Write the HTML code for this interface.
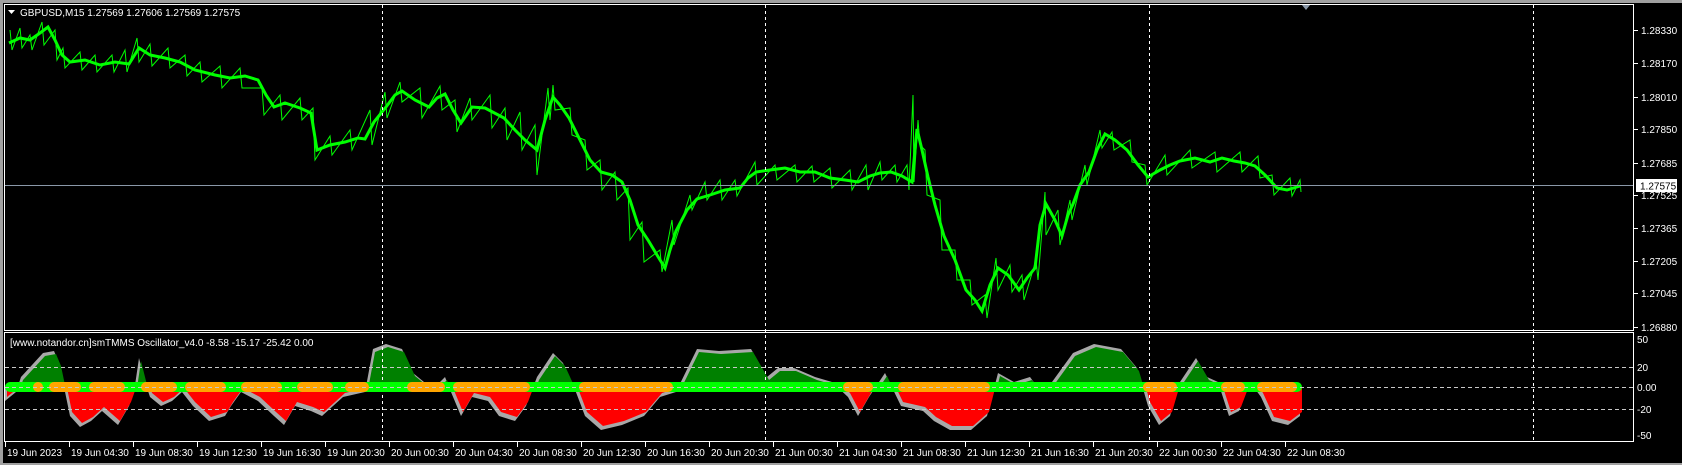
<!DOCTYPE html>
<html><head><meta charset="utf-8">
<style>
html,body{margin:0;padding:0;background:#000;overflow:hidden}
body{width:1682px;height:465px;position:relative}
svg{position:absolute;left:0;top:0}
text{font-family:"Liberation Sans",sans-serif;font-size:10px;fill:#fff}
</style></head><body>
<svg width="1682" height="465" viewBox="0 0 1682 465" xmlns="http://www.w3.org/2000/svg">
<defs>
<clipPath id="up"><rect x="5" y="333" width="1628" height="54"/></clipPath>
<clipPath id="dn"><rect x="5" y="387" width="1628" height="54"/></clipPath>
</defs>
<rect x="0" y="0" width="1682" height="465" fill="#000"/>
<!-- oscillator histogram -->
<g id="oscg">
<polygon id="op" points="5,387 5,401 16,392 21,377 43,353 54,351 59,363 64,387 70,416 80,427 91,421 102,411 118,425 129,406 134,392 139,358 145,382 150,397 161,406 172,401 182,392 193,406 209,421 225,416 231,406 241,392 258,401 274,416 284,425 295,406 311,411 322,416 333,406 343,397 365,392 373,349 386,344 402,349 413,373 424,382 435,387 445,377 451,392 461,416 472,397 488,401 499,416 515,421 526,406 537,377 553,353 563,363 574,387 585,416 601,430 622,425 644,416 660,397 676,392 697,349 719,351 751,349 767,377 778,368 794,368 815,377 832,382 848,397 858,416 869,397 885,373 901,406 923,411 934,421 950,430 971,430 987,416 998,373 1014,382 1030,377 1041,392 1052,382 1073,353 1094,344 1121,349 1137,368 1148,406 1159,425 1170,416 1180,382 1196,358 1207,377 1218,382 1229,416 1239,411 1250,382 1261,397 1272,421 1288,425 1300,416 1300,387" fill="#a8a8a8"/>
<g clip-path="url(#up)"><polygon points="5,387 5,401 16,392 21,377 43,353 54,351 59,363 64,387 70,416 80,427 91,421 102,411 118,425 129,406 134,392 139,358 145,382 150,397 161,406 172,401 182,392 193,406 209,421 225,416 231,406 241,392 258,401 274,416 284,425 295,406 311,411 322,416 333,406 343,397 365,392 373,349 386,344 402,349 413,373 424,382 435,387 445,377 451,392 461,416 472,397 488,401 499,416 515,421 526,406 537,377 553,353 563,363 574,387 585,416 601,430 622,425 644,416 660,397 676,392 697,349 719,351 751,349 767,377 778,368 794,368 815,377 832,382 848,397 858,416 869,397 885,373 901,406 923,411 934,421 950,430 971,430 987,416 998,373 1014,382 1030,377 1041,392 1052,382 1073,353 1094,344 1121,349 1137,368 1148,406 1159,425 1170,416 1180,382 1196,358 1207,377 1218,382 1229,416 1239,411 1250,382 1261,397 1272,421 1288,425 1300,416 1300,387" fill="#008000" transform="translate(2,3)"/></g>
<g clip-path="url(#dn)"><polygon points="5,387 5,401 16,392 21,377 43,353 54,351 59,363 64,387 70,416 80,427 91,421 102,411 118,425 129,406 134,392 139,358 145,382 150,397 161,406 172,401 182,392 193,406 209,421 225,416 231,406 241,392 258,401 274,416 284,425 295,406 311,411 322,416 333,406 343,397 365,392 373,349 386,344 402,349 413,373 424,382 435,387 445,377 451,392 461,416 472,397 488,401 499,416 515,421 526,406 537,377 553,353 563,363 574,387 585,416 601,430 622,425 644,416 660,397 676,392 697,349 719,351 751,349 767,377 778,368 794,368 815,377 832,382 848,397 858,416 869,397 885,373 901,406 923,411 934,421 950,430 971,430 987,416 998,373 1014,382 1030,377 1041,392 1052,382 1073,353 1094,344 1121,349 1137,368 1148,406 1159,425 1170,416 1180,382 1196,358 1207,377 1218,382 1229,416 1239,411 1250,382 1261,397 1272,421 1288,425 1300,416 1300,387" fill="#ff0000" transform="translate(2,-4)"/></g>
</g>
<!-- price -->
<g fill="none" stroke="#00ff00" stroke-linejoin="miter">
<polyline stroke-width="3" points="9,43 20,38 30,40 40,33 48,27 55,40 62,55 70,62 85,60 100,65 115,62 129,64 139,48 150,55 165,58 180,62 195,70 215,75 230,78 245,76 258,80 266,95 274,107 285,103 300,108 311,113 317,150 330,145 345,142 358,138 365,139 374,122 386,107 395,95 402,91 415,100 429,107 437,98 445,94 453,110 461,123 472,107 485,108 504,118 515,130 525,140 537,150 545,120 553,97 560,105 569,118 580,140 590,160 601,172 612,175 622,182 630,200 638,225 648,240 657,255 665,268 670,250 676,231 687,210 697,199 710,195 725,190 740,188 748,178 756,172 770,170 785,168 800,172 815,172 830,178 845,180 858,182 870,176 880,173 891,172 902,176 912,182 915,150 917,129 922,150 928,177 935,205 944,236 955,260 966,290 975,300 982,311 990,285 998,268 1008,275 1019,290 1027,278 1035,268 1040,225 1046,204 1055,220 1062,236 1068,215 1073,204 1080,185 1089,172 1097,150 1105,134 1115,140 1127,150 1138,165 1148,177 1160,170 1170,165 1180,161 1195,158 1210,162 1222,158 1234,161 1245,163 1255,166 1265,175 1277,188 1287,190 1300,186"/>
<polyline stroke-width="1" points="10,30 12,50 20,28 22,48 30,35 32,50 42,22 44,45 55,30 57,60 63,48 65,68 80,52 82,70 95,55 97,72 112,55 114,72 125,50 127,72 137,38 139,62 150,44 152,66 168,48 170,68 185,55 187,76 200,62 202,82 220,66 222,88 240,68 242,88 262,88 264,115 280,95 282,120 300,98 302,120 313,108 315,160 330,136 332,155 350,130 352,150 370,110 372,145 385,92 387,118 400,82 402,102 420,88 422,118 440,86 442,110 455,100 457,132 470,98 472,120 490,95 492,128 505,108 507,140 520,112 522,150 535,125 537,175 548,88 550,120 553,85 555,110 570,108 572,135 585,140 587,170 600,160 602,190 615,172 617,200 628,188 630,240 642,222 644,262 660,250 662,272 672,220 674,245 690,195 692,210 705,182 707,200 720,180 722,200 735,180 737,196 755,162 757,185 775,165 777,180 795,165 797,182 812,166 814,182 830,168 832,188 850,170 852,190 866,165 868,190 880,162 882,180 895,165 897,182 907,165 909,190 913,95 914,182 918,120 920,145 925,150 927,195 940,200 942,250 955,250 957,280 970,280 972,305 985,295 987,318 996,258 998,290 1010,265 1012,292 1022,275 1024,300 1036,260 1038,280 1045,192 1046,235 1058,210 1060,245 1070,200 1072,220 1085,165 1087,185 1100,130 1102,148 1112,132 1114,150 1130,140 1132,162 1145,165 1147,185 1165,155 1167,175 1190,150 1192,168 1215,152 1217,172 1240,152 1242,172 1258,156 1260,178 1272,175 1274,195 1290,178 1292,196 1300,180 1301,192"/>
</g>
<g stroke="#fff" stroke-width="1" stroke-dasharray="3,3" fill="none">
<line x1="382.5" y1="5" x2="382.5" y2="442"/>
<line x1="765.5" y1="5" x2="765.5" y2="442"/>
<line x1="1149.5" y1="5" x2="1149.5" y2="442"/>
<line x1="1533.5" y1="5" x2="1533.5" y2="442"/>
</g>
<g stroke="#c8c8c8" stroke-dasharray="4,3" fill="none">
<line x1="5" y1="367.5" x2="1634" y2="367.5"/>
<line x1="5" y1="409.5" x2="1634" y2="409.5"/>
</g>
<!-- zero band -->
<line x1="10" y1="387" x2="1297" y2="387" stroke="#00ff00" stroke-width="10" stroke-linecap="round"/>
<g stroke="#ffa500" stroke-width="10" stroke-linecap="round">
<line x1="38" y1="387" x2="38" y2="387"/>
<line x1="54" y1="387" x2="76" y2="387"/>
<line x1="94" y1="387" x2="120" y2="387"/>
<line x1="146" y1="387" x2="172" y2="387"/>
<line x1="190" y1="387" x2="221" y2="387"/>
<line x1="246" y1="387" x2="277" y2="387"/>
<line x1="302" y1="387" x2="328" y2="387"/>
<line x1="350" y1="387" x2="364" y2="387"/>
<line x1="412" y1="387" x2="440" y2="387"/>
<line x1="458" y1="387" x2="525" y2="387"/>
<line x1="584" y1="387" x2="668" y2="387"/>
<line x1="848" y1="387" x2="868" y2="387"/>
<line x1="903" y1="387" x2="985" y2="387"/>
<line x1="1148" y1="387" x2="1172" y2="387"/>
<line x1="1226" y1="387" x2="1240" y2="387"/>
<line x1="1262" y1="387" x2="1292" y2="387"/>
</g>
<line x1="5" y1="387.5" x2="1634" y2="387.5" stroke="#c8c8c8" stroke-dasharray="4,3"/>
<line x1="5" y1="185.5" x2="1634" y2="185.5" stroke="#8a98a8"/>
<rect x="0" y="0" width="1682" height="3" fill="#a0a0a0"/>
<rect x="0" y="0" width="3" height="465" fill="#a0a0a0"/>
<rect x="0" y="463" width="1682" height="2" fill="#a0a0a0"/>
<rect x="4.5" y="4.5" width="1629" height="326" fill="none" stroke="#fff"/>
<rect x="4.5" y="332.5" width="1629" height="109" fill="none" stroke="#fff"/>
<polygon points="1302,5 1310,5 1306,10" fill="#8a98a8"/>
<polygon points="8,10 15,10 11.5,14" fill="#fff"/>
<text x="20" y="16">GBPUSD,M15  1.27569 1.27606 1.27569 1.27575</text>
<text x="10" y="346">[www.notandor.cn]smTMMS Oscillator_v4.0 -8.58 -15.17 -25.42 0.00</text>
<g stroke="#fff">
<line x1="1634" y1="30.5" x2="1638" y2="30.5"/><line x1="1634" y1="63.5" x2="1638" y2="63.5"/>
<line x1="1634" y1="97.5" x2="1638" y2="97.5"/><line x1="1634" y1="129.5" x2="1638" y2="129.5"/>
<line x1="1634" y1="163.5" x2="1638" y2="163.5"/><line x1="1634" y1="195.5" x2="1638" y2="195.5"/>
<line x1="1634" y1="228.5" x2="1638" y2="228.5"/><line x1="1634" y1="261.5" x2="1638" y2="261.5"/>
<line x1="1634" y1="293.5" x2="1638" y2="293.5"/><line x1="1634" y1="327.5" x2="1638" y2="327.5"/>
</g>
<text x="1641" y="34">1.28330</text><text x="1641" y="67">1.28170</text><text x="1641" y="101">1.28010</text>
<text x="1641" y="133">1.27850</text><text x="1641" y="167">1.27685</text><text x="1641" y="199">1.27525</text>
<text x="1641" y="232">1.27365</text><text x="1641" y="265">1.27205</text><text x="1641" y="297">1.27045</text>
<text x="1641" y="331">1.26880</text>
<text x="1637" y="343">50</text><text x="1637" y="371">20</text><text x="1637" y="391">0.00</text>
<text x="1637" y="413">-20</text><text x="1637" y="439">-50</text>
<rect x="1636" y="179" width="41" height="13" fill="#fff"/>
<text x="1640" y="189.5" style="fill:#000">1.27575</text>
<g stroke="#fff">
<line x1="5.5" y1="442" x2="5.5" y2="447"/><line x1="69.5" y1="442" x2="69.5" y2="447"/><line x1="133.5" y1="442" x2="133.5" y2="447"/><line x1="197.5" y1="442" x2="197.5" y2="447"/><line x1="261.5" y1="442" x2="261.5" y2="447"/><line x1="325.5" y1="442" x2="325.5" y2="447"/><line x1="389.5" y1="442" x2="389.5" y2="447"/><line x1="453.5" y1="442" x2="453.5" y2="447"/><line x1="517.5" y1="442" x2="517.5" y2="447"/><line x1="581.5" y1="442" x2="581.5" y2="447"/><line x1="645.5" y1="442" x2="645.5" y2="447"/><line x1="709.5" y1="442" x2="709.5" y2="447"/><line x1="773.5" y1="442" x2="773.5" y2="447"/><line x1="837.5" y1="442" x2="837.5" y2="447"/><line x1="901.5" y1="442" x2="901.5" y2="447"/><line x1="965.5" y1="442" x2="965.5" y2="447"/><line x1="1029.5" y1="442" x2="1029.5" y2="447"/><line x1="1093.5" y1="442" x2="1093.5" y2="447"/><line x1="1157.5" y1="442" x2="1157.5" y2="447"/><line x1="1221.5" y1="442" x2="1221.5" y2="447"/><line x1="1285.5" y1="442" x2="1285.5" y2="447"/>
</g>
<text x="7" y="456">19 Jun 2023</text><text x="71" y="456">19 Jun 04:30</text><text x="135" y="456">19 Jun 08:30</text><text x="199" y="456">19 Jun 12:30</text><text x="263" y="456">19 Jun 16:30</text><text x="327" y="456">19 Jun 20:30</text><text x="391" y="456">20 Jun 00:30</text><text x="455" y="456">20 Jun 04:30</text><text x="519" y="456">20 Jun 08:30</text><text x="583" y="456">20 Jun 12:30</text><text x="647" y="456">20 Jun 16:30</text><text x="711" y="456">20 Jun 20:30</text><text x="775" y="456">21 Jun 00:30</text><text x="839" y="456">21 Jun 04:30</text><text x="903" y="456">21 Jun 08:30</text><text x="967" y="456">21 Jun 12:30</text><text x="1031" y="456">21 Jun 16:30</text><text x="1095" y="456">21 Jun 20:30</text><text x="1159" y="456">22 Jun 00:30</text><text x="1223" y="456">22 Jun 04:30</text><text x="1287" y="456">22 Jun 08:30</text>
</svg>
</body></html>
